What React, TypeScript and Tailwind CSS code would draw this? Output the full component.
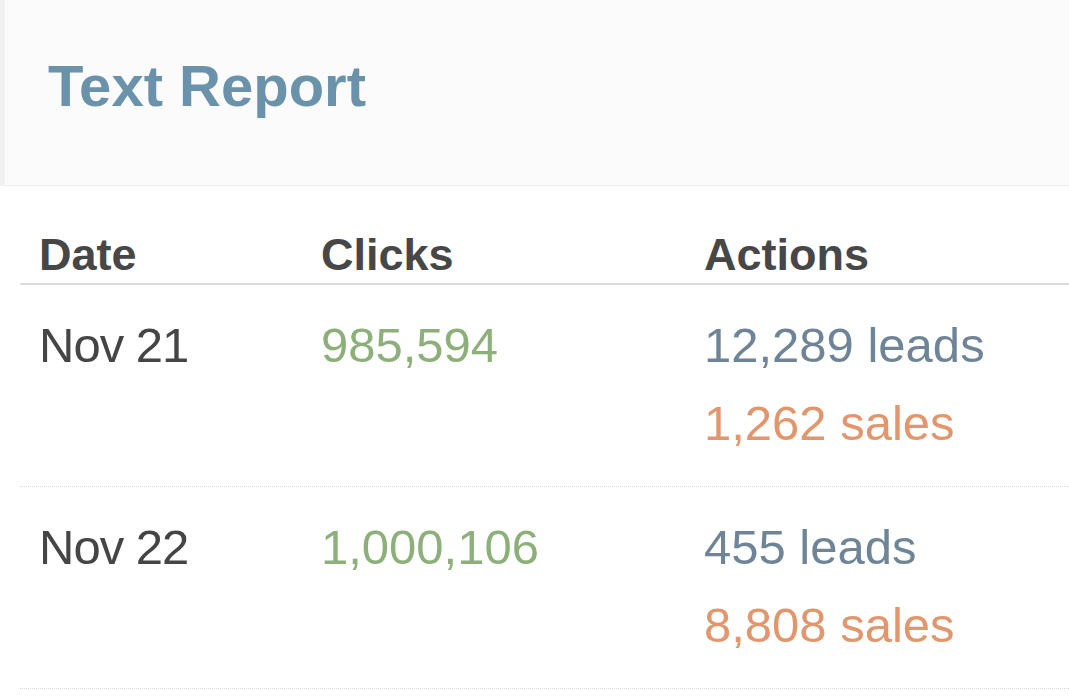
import React from 'react';

type Row = { date: string; clicks: string; leads: string; sales: string };

const rows: Row[] = [
  { date: 'Nov 21', clicks: '985,594', leads: '12,289 leads', sales: '1,262 sales' },
  { date: 'Nov 22', clicks: '1,000,106', leads: '455 leads', sales: '8,808 sales' },
];

const App: React.FC = () => {
  return (
    <div className="w-[1069px] h-[700px] overflow-hidden bg-white font-['Liberation_Sans',Arial,sans-serif]">
      {/* Panel heading */}
      <div className="h-[186px] bg-[#fbfbfc] border-l-[5px] border-[#f2f2f3] border-b border-b-[#ededef] pl-[43px] pt-[54px]">
        <h2 className="text-[58px] leading-[64px] font-bold text-[#6b92ab]">Text Report</h2>
      </div>

      {/* Report table */}
      <div className="ml-[20px] mt-[43px]">
        <div className="grid grid-cols-[283px_383px_1fr] border-b-2 border-[#dcdcdc] text-[45px] leading-[52px] font-bold text-[#474747]">
          <div className="pl-[19px] pb-[2px]">Date</div>
          <div className="pl-[18px] pb-[2px]">Clicks</div>
          <div className="pl-[18px] pb-[2px]">Actions</div>
        </div>
        {rows.map((r) => (
          <div
            key={r.date}
            className="grid grid-cols-[283px_383px_1fr] border-b border-dotted border-[#d8d8d8] text-[49px] leading-[78px] pt-[21px] pb-[24px]"
          >
            <div className="pl-[19px] text-[#454545] tracking-[-1px]">{r.date}</div>
            <div className="pl-[18px] text-[#8db07a]">{r.clicks}</div>
            <div className="pl-[18px] flex flex-col">
              <span className="text-[#6f8597]">{r.leads}</span>
              <span className="text-[#e3956b]">{r.sales}</span>
            </div>
          </div>
        ))}
      </div>
    </div>
  );
};

export default App;
